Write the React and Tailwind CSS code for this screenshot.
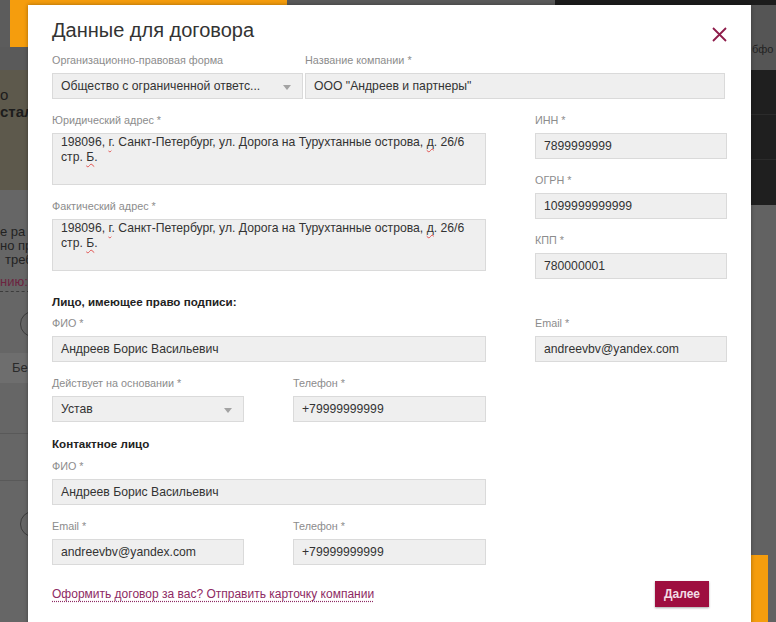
import React from 'react';

const Field = ({ label, className = '', children }) => (
  <div className={className}>
    <div className="mb-[6px] text-[10.8px] leading-[14px] text-[#8c8c8c]">{label}</div>
    {children}
  </div>
);

const Box = ({ children, className = '' }) => (
  <div className={`flex h-[26px] items-center border border-[#dadada] bg-[#efefef] pl-[8px] text-[12.2px] text-[#333] ${className}`}>
    {children}
  </div>
);

const Select = ({ children }) => (
  <div className="flex h-[26px] items-center justify-between border border-[#dadada] bg-[#efefef] pl-[8px] pr-[11px] text-[12.2px] text-[#333]">
    <span className="truncate">{children}</span>
    <svg width="8" height="5" viewBox="0 0 8 5" className="mt-[2px] shrink-0">
      <path d="M0 0h8L4 5z" fill="#a3a3a3" />
    </svg>
  </div>
);

const Typo = ({ children }) => (
  <span className="underline decoration-wavy decoration-[#e0514f] decoration-1 underline-offset-[2px]">{children}</span>
);

const Address = () => (
  <div className="h-[52px] whitespace-nowrap border border-[#dadada] bg-[#efefef] pl-[8px] pt-[1px] text-[12.2px] leading-[15px] text-[#333]">
    198096, <Typo>г</Typo>. Санкт-Петербург, ул. Дорога на Турухтанные острова, <Typo>д</Typo>. 26/6
    <br />
    стр. <Typo>Б</Typo>.
  </div>
);

export default function App() {
  return (
    <div className="relative h-[622px] w-[776px] overflow-hidden bg-[#646464] font-['Liberation_Sans',Arial,sans-serif]">
      {/* page behind the dialog */}
      <div className="flex h-full">
        <div className="flex w-[388px] flex-col">
          <div className="flex h-[47px]">
            <div className="w-[10px] bg-[#5c5c5c]" />
            <div className="w-[277px] bg-[#f59d0d]" />
            <div className="flex-1 bg-[#5a5a5a]" />
          </div>
          <div className="h-[23px] bg-[#5a5a5a]" />
          <div className="h-[120px] bg-[#5d594c] pt-[16px] text-[15px] leading-[17px] text-[#1c1c1c]">
            <div>о</div>
            <div className="font-bold">стал</div>
          </div>
          <div className="flex-1 bg-[#666] pt-[35px] text-[13px] leading-[14px] text-[#222]">
            <div>е ра</div>
            <div>но пр</div>
            <div className="pl-[5px]">треб</div>
            <div className="mt-[8px] w-[30px] border-b border-dashed border-[#3c3c3c] pb-[2px] text-[#6d2440]">нию:</div>
            <div className="ml-[20px] mt-[19px] h-[26px] w-[26px] rounded-full border border-[#3c3c3c]" />
            <div className="mt-[16px] flex h-[30px] items-center bg-[#6e6e6e] pl-[12px] text-[#2a2a2a]">Бе</div>
            <div className="mt-[50px] border-t border-[#595959]" />
            <div className="mt-[46px] border-t border-[#595959]" />
            <div className="ml-[20px] mt-[30px] h-[26px] w-[26px] rounded-full border border-[#3c3c3c]" />
          </div>
        </div>
        <div className="flex flex-1 flex-col">
          <div className="flex h-[5px]">
            <div className="w-[167px] bg-[#5a5a5a]" />
            <div className="flex-1 bg-[#1c1c1c]" />
          </div>
          <div className="h-[65px] bg-[#555] pl-[364px] pt-[36px] text-[11px] text-[#222]">бфо</div>
          <div className="h-[135px] bg-[#1f1f1f]">
            <div className="mt-[44px] border-t border-[#2b2b2b]" />
            <div className="mt-[44px] border-t border-[#2b2b2b]" />
          </div>
          <div className="flex flex-1 flex-col justify-end bg-[#626262] pl-[363px]">
            <div className="h-[67px] w-[17px] bg-[#f59d0d]" />
          </div>
        </div>
      </div>

      {/* dialog */}
      <div className="absolute left-[28px] top-[5px] h-[640px] w-[723px] bg-white px-[24px] pt-[13px] shadow-[0_0_4px_rgba(0,0,0,0.35)]">
        <div className="flex items-start justify-between">
          <h2 className="text-[20px] leading-[24px] text-[#333]">Данные для договора</h2>
          <svg width="15" height="15" viewBox="0 0 15 15" className="mt-[9px]">
            <path d="M1 1l13 13M14 1L1 14" stroke="#8e1c4a" strokeWidth="1.8" />
          </svg>
        </div>

        <div className="mt-[11px] flex gap-[2px] pr-[2px]">
          <Field label="Организационно-правовая форма" className="w-[251px]">
            <Select>Общество с ограниченной ответс...</Select>
          </Field>
          <Field label="Название компании *" className="flex-1">
            <Box>ООО "Андреев и партнеры"</Box>
          </Field>
        </div>

        <div className="mt-[14px] grid grid-cols-[434px_192px] gap-x-[49px]">
          <div className="space-y-[14px]">
            <Field label="Юридический адрес *"><Address /></Field>
            <Field label="Фактический адрес *"><Address /></Field>
          </div>
          <div className="space-y-[14px]">
            <Field label="ИНН *"><Box>7899999999</Box></Field>
            <Field label="ОГРН *"><Box>1099999999999</Box></Field>
            <Field label="КПП *"><Box>780000001</Box></Field>
          </div>
        </div>

        <h3 className="mt-[15px] text-[11.6px] font-bold leading-[16px] text-[#222]">Лицо, имеющее право подписи:</h3>
        <div className="mt-[6px] grid grid-cols-[434px_192px] gap-x-[49px]">
          <Field label="ФИО *"><Box>Андреев Борис Васильевич</Box></Field>
          <Field label="Email *"><Box>andreevbv@yandex.com</Box></Field>
        </div>
        <div className="mt-[14px] grid w-[434px] grid-cols-[192px_193px] gap-x-[49px]">
          <Field label="Действует на основании *"><Select>Устав</Select></Field>
          <Field label="Телефон *"><Box>+79999999999</Box></Field>
        </div>

        <h3 className="mt-[14px] text-[11.6px] font-bold leading-[16px] text-[#222]">Контактное лицо</h3>
        <Field label="ФИО *" className="mt-[7px] w-[434px]">
          <Box>Андреев Борис Васильевич</Box>
        </Field>
        <div className="mt-[14px] grid w-[434px] grid-cols-[192px_193px] gap-x-[49px]">
          <Field label="Email *"><Box>andreevbv@yandex.com</Box></Field>
          <Field label="Телефон *"><Box>+79999999999</Box></Field>
        </div>

        <div className="mt-[16px] flex items-center justify-between pr-[18px]">
          <a className="text-[12px] text-[#8e2a63] underline decoration-dotted underline-offset-[3px]">
            Оформить договор за вас? Отправить карточку компании
          </a>
          <button className="h-[26px] bg-[#9e0e3f] px-[9px] text-[12px] font-bold text-[#f3dde5] shadow-[0_1px_2px_rgba(0,0,0,0.35)]">
            Далее
          </button>
        </div>
      </div>
    </div>
  );
}
